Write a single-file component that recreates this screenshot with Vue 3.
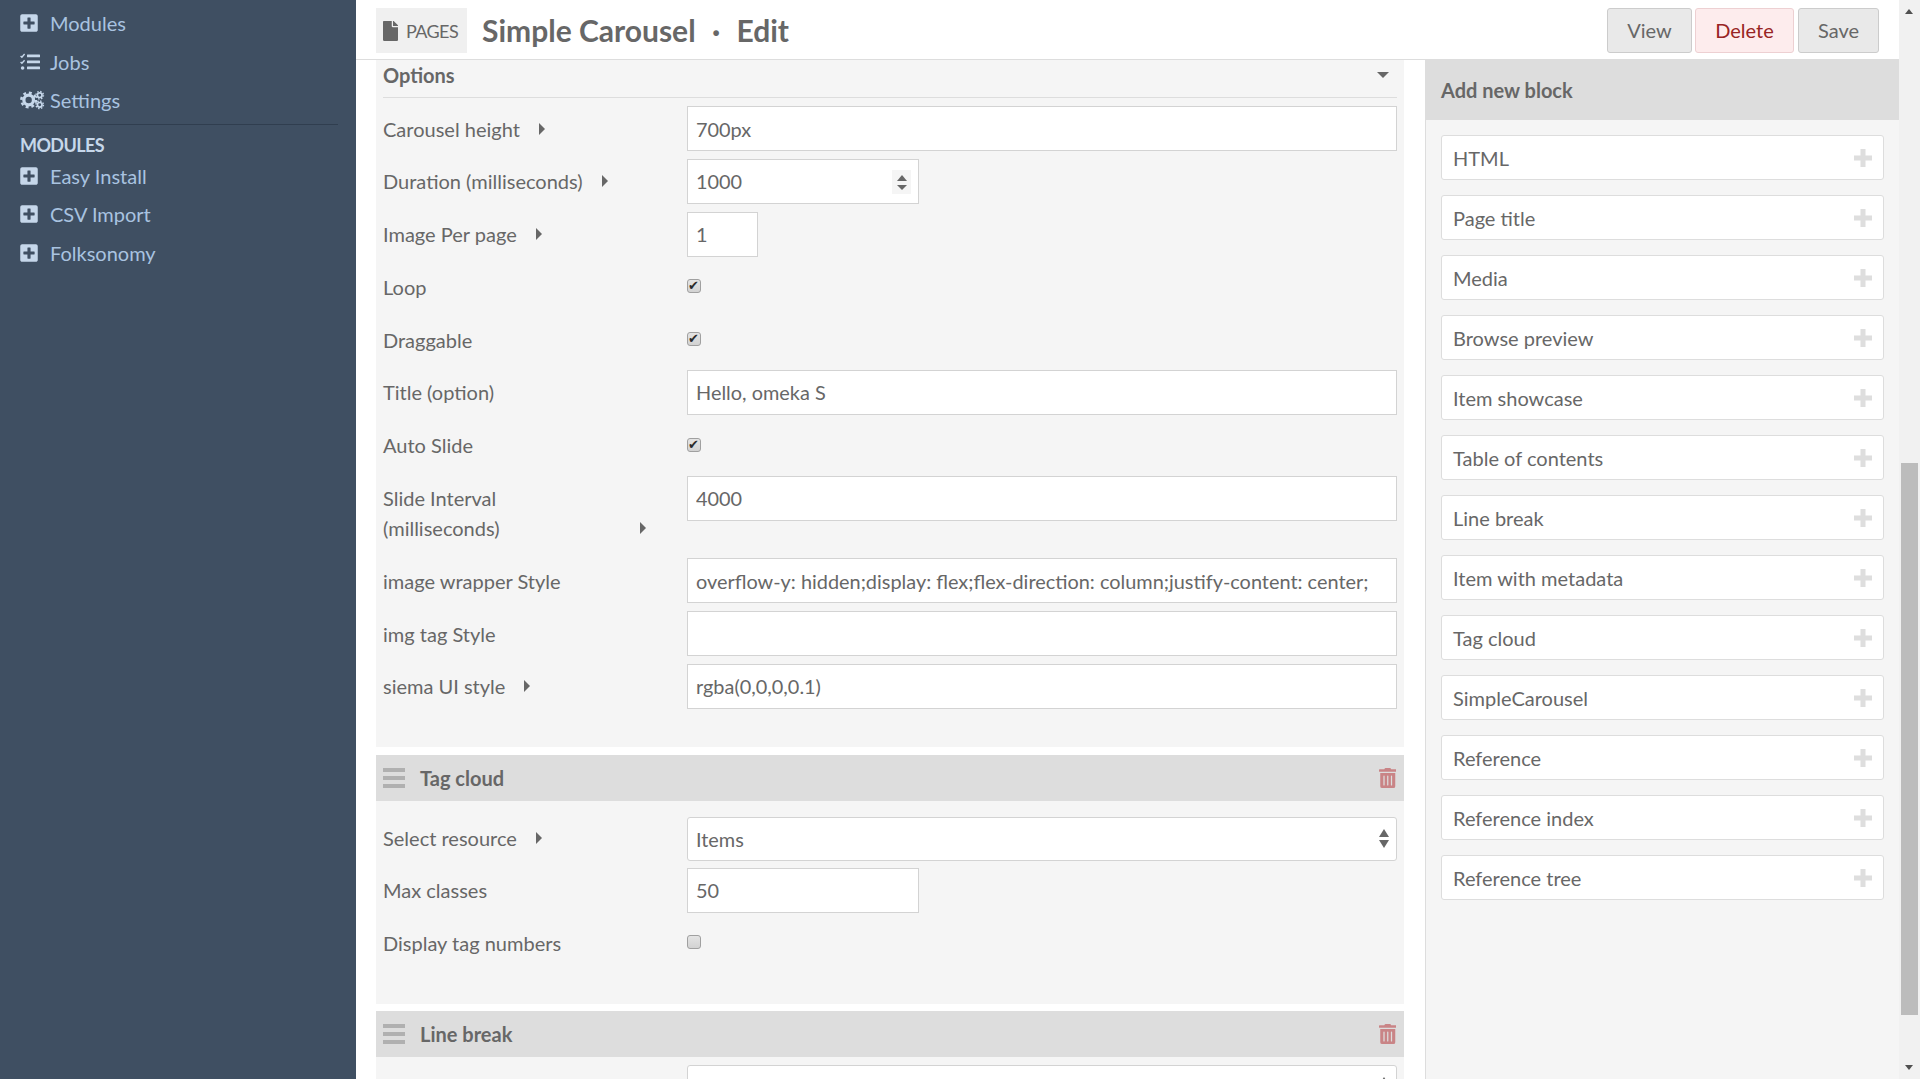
<script setup>
const navTop = [
  { name: 'Modules', icon: 'plus' },
  { name: 'Jobs', icon: 'tasks' },
  { name: 'Settings', icon: 'cogs' }
]
const navModules = ['Easy Install', 'CSV Import', 'Folksonomy']
const blocks = [
  'HTML', 'Page title', 'Media', 'Browse preview', 'Item showcase', 'Table of contents',
  'Line break', 'Item with metadata', 'Tag cloud', 'SimpleCarousel', 'Reference',
  'Reference index', 'Reference tree'
]
const plusSquare = 'M400 32H48C21.5 32 0 53.5 0 80v352c0 26.5 21.5 48 48 48h352c26.5 0 48-21.5 48-48V80c0-26.5-21.5-48-48-48zm-32 252c0 6.6-5.4 12-12 12h-92v92c0 6.6-5.4 12-12 12h-56c-6.6 0-12-5.4-12-12v-92H92c-6.6 0-12-5.4-12-12v-56c0-6.6 5.4-12 12-12h92v-92c0-6.6 5.4-12 12-12h56c6.6 0 12 5.4 12 12v92h92c6.6 0 12 5.4 12 12v56z'
const trash = 'M32 464a48 48 0 0 0 48 48h288a48 48 0 0 0 48-48V128H32zm272-256a16 16 0 0 1 32 0v224a16 16 0 0 1-32 0zm-96 0a16 16 0 0 1 32 0v224a16 16 0 0 1-32 0zm-96 0a16 16 0 0 1 32 0v224a16 16 0 0 1-32 0zM432 32H312l-9.4-18.7A24 24 0 0 0 281.1 0H166.8a23.72 23.72 0 0 0-21.4 13.3L136 32H16A16 16 0 0 0 0 48v32a16 16 0 0 0 16 16h416a16 16 0 0 0 16-16V48a16 16 0 0 0-16-16z'
const filePath = 'M224 136V0H24C10.7 0 0 10.7 0 24v464c0 13.3 10.7 24 24 24h336c13.3 0 24-10.7 24-24V160H248c-13.2 0-24-10.8-24-24zm160-14.1v6.1H256V0h6.1c6.4 0 12.5 2.5 17 7l97.9 98c4.5 4.5 7 10.6 7 16.9z'
</script>

<template>
  <div class="page">
    <aside class="sidebar">
      <ul class="nav first">
        <li v-for="item in navTop" :key="item.name">
          <svg v-if="item.icon === 'plus'" class="nav-icon" viewBox="0 0 448 512"><path :d="plusSquare" /></svg>
          <svg v-else-if="item.icon === 'tasks'" class="nav-icon tasks" viewBox="0 0 20 18">
            <path d="M.6 3l1.3 1.3L4.6 1M.6 9l1.3 1.3 2.7-3" fill="none" stroke="currentColor" stroke-width="1.4" />
            <circle cx="2.6" cy="15" r="1.8" />
            <rect x="7" y="1.6" width="13" height="2.6" rx=".5" />
            <rect x="7" y="7.6" width="13" height="2.6" rx=".5" />
            <rect x="7" y="13.6" width="13" height="2.6" rx=".5" />
          </svg>
          <svg v-else class="nav-icon cogs" viewBox="0 0 26 20">
            <circle cx="9" cy="10" r="5" fill="none" stroke="currentColor" stroke-width="3.4" />
            <circle cx="9" cy="10" r="7.6" fill="none" stroke="currentColor" stroke-width="2.6" stroke-dasharray="3 2.97" />
            <circle cx="20.5" cy="5" r="2.4" fill="none" stroke="currentColor" stroke-width="1.8" />
            <circle cx="20.5" cy="5" r="3.9" fill="none" stroke="currentColor" stroke-width="1.5" stroke-dasharray="1.5 1.56" />
            <circle cx="20.5" cy="15" r="2.4" fill="none" stroke="currentColor" stroke-width="1.8" />
            <circle cx="20.5" cy="15" r="3.9" fill="none" stroke="currentColor" stroke-width="1.5" stroke-dasharray="1.5 1.56" />
          </svg>
          <span class="nav-text" :class="{ tight: item.icon === 'cogs', mid: item.icon === 'tasks' }">{{ item.name }}</span>
        </li>
      </ul>
      <div class="nav-rule"></div>
      <h4 class="nav-head">MODULES</h4>
      <ul class="nav">
        <li v-for="name in navModules" :key="name">
          <svg class="nav-icon" viewBox="0 0 448 512"><path :d="plusSquare" /></svg>
          <span class="nav-text">{{ name }}</span>
        </li>
      </ul>
    </aside>

    <div class="main">
      <header class="topbar">
        <div class="crumb">
          <svg class="crumb-icon" viewBox="0 0 384 512"><path :d="filePath" /></svg>
          <span>PAGES</span>
        </div>
        <h1 class="title">Simple Carousel <span class="dot">·</span> Edit</h1>
        <div class="actions">
          <button class="btn btn-view">View</button>
          <button class="btn btn-delete">Delete</button>
          <button class="btn btn-save">Save</button>
        </div>
      </header>

      <div class="content">
        <section class="blocks">
          <div class="block opts-block">
            <div class="opts-head">
              <span>Options</span>
              <i class="caret-down"></i>
            </div>
            <div class="row">
              <label class="lbl">Carousel height<i class="caret"></i></label>
              <input class="field" value="700px" />
            </div>
            <div class="row">
              <label class="lbl">Duration (milliseconds)<i class="caret"></i></label>
              <div class="spin-wrap">
                <input class="field" value="1000" />
                <span class="spin"><i class="up"></i><i class="down"></i></span>
              </div>
            </div>
            <div class="row">
              <label class="lbl">Image Per page<i class="caret"></i></label>
              <input class="field tiny" value="1" />
            </div>
            <div class="row">
              <label class="lbl">Loop</label>
              <input class="check" type="checkbox" checked />
            </div>
            <div class="row">
              <label class="lbl">Draggable</label>
              <input class="check" type="checkbox" checked />
            </div>
            <div class="row">
              <label class="lbl">Title (option)</label>
              <input class="field" value="Hello, omeka S" />
            </div>
            <div class="row">
              <label class="lbl">Auto Slide</label>
              <input class="check" type="checkbox" checked />
            </div>
            <div class="row tall">
              <label class="lbl lbl-wrap"><span class="wrapped">Slide Interval (milliseconds)</span><i class="caret"></i></label>
              <input class="field" value="4000" />
            </div>
            <div class="row">
              <label class="lbl">image wrapper Style</label>
              <input class="field" value="overflow-y: hidden;display: flex;flex-direction: column;justify-content: center;" />
            </div>
            <div class="row">
              <label class="lbl">img tag Style</label>
              <input class="field" value="" />
            </div>
            <div class="row">
              <label class="lbl">siema UI style<i class="caret"></i></label>
              <input class="field" value="rgba(0,0,0,0.1)" />
            </div>
          </div>

          <div class="block tag-block">
            <div class="block-head">
              <span class="bars"><i></i><i></i><i></i></span>
              <span class="block-name">Tag cloud</span>
              <svg class="trash" viewBox="0 0 448 512"><path :d="trash" /></svg>
            </div>
            <div class="block-body">
              <div class="row select-row">
                <label class="lbl">Select resource<i class="caret"></i></label>
                <div class="select-wrap">
                  <select class="field select"><option>Items</option></select>
                  <span class="select-arrows"><i class="up"></i><i class="down"></i></span>
                </div>
              </div>
              <div class="row">
                <label class="lbl">Max classes</label>
                <input class="field short" value="50" />
              </div>
              <div class="row">
                <label class="lbl">Display tag numbers</label>
                <input class="check" type="checkbox" />
              </div>
            </div>
          </div>

          <div class="block">
            <div class="block-head">
              <span class="bars"><i></i><i></i><i></i></span>
              <span class="block-name">Line break</span>
              <svg class="trash" viewBox="0 0 448 512"><path :d="trash" /></svg>
            </div>
            <div class="block-body last">
              <div class="row select-row">
                <label class="lbl"></label>
                <div class="select-wrap">
                  <select class="field select"><option></option></select>
                  <span class="select-arrows"><i class="up"></i><i class="down"></i></span>
                </div>
              </div>
            </div>
          </div>
        </section>

        <aside class="panel">
          <h3 class="panel-head">Add new block</h3>
          <div class="panel-list">
            <button v-for="b in blocks" :key="b" class="add-btn">
              <span>{{ b }}</span>
              <svg class="add-plus" viewBox="0 0 18 18"><path d="M6.5 0h5v6.5H18v5h-6.5V18h-5v-6.5H0v-5h6.5z" /></svg>
            </button>
          </div>
        </aside>
      </div>
    </div>

    <div class="scrollbar">
      <i class="sb-up"></i>
      <div class="sb-thumb"></div>
      <i class="sb-down"></i>
    </div>
  </div>
</template>

<style>
html, body { margin: 0; overflow: hidden; }
</style>

<style scoped>
.page {
  display: flex;
  height: 100vh;
  overflow: hidden;
  font-family: Lato, "Open Sans", sans-serif;
  font-size: 20px;
  color: #676767;
  background: #fff;
}

/* sidebar */
.sidebar {
  width: 356px;
  flex: none;
  background: #3f4f62;
  color: #a9c3e0;
}
.nav {
  list-style: none;
  margin: 0;
  padding: 0 0 0 20px;
}
.nav.first { padding-top: 4px; }
.nav li {
  display: flex;
  align-items: center;
  height: 38.5px;
}
.nav-icon {
  width: 18px;
  height: 20px;
  flex: none;
  fill: #c6d7ea;
  color: #c6d7ea;
}
.nav-icon.tasks { width: 20px; }
.nav-icon.cogs {
  width: 25px;
}
.nav-text {
  margin-left: 12px;
}
.nav-text.mid { margin-left: 10px; }
.nav-text.tight { margin-left: 5px; }
.nav-rule {
  margin: 4px 18px 0 20px;
  border-top: 1px solid #303e4f;
}
.nav-head {
  margin: 8px 0 0 20px;
  font-size: 18px;
  line-height: 24px;
  font-weight: 700;
  letter-spacing: -0.6px;
  color: #c6d7ea;
}

/* main */
.main {
  flex: 1;
  min-width: 0;
  display: flex;
  flex-direction: column;
}
.topbar {
  height: 60px;
  flex: none;
  display: flex;
  align-items: flex-start;
  padding: 8px 20px 0;
  box-sizing: border-box;
  border-bottom: 1px solid #ddd;
}
.crumb {
  width: 91px;
  height: 45px;
  box-sizing: border-box;
  background: #f0f0f0;
  display: flex;
  align-items: center;
  padding-left: 7px;
  font-size: 18px;
  letter-spacing: -0.6px;
}
.crumb-icon {
  width: 15px;
  height: 20px;
  margin-right: 8px;
  fill: #676767;
}
.title {
  margin: 0 0 0 15px;
  font-size: 30px;
  line-height: 45px;
  font-weight: 700;
  color: #676767;
  white-space: pre;
}
.dot {
  margin: 0 9px;
}
.actions {
  margin-left: auto;
  display: flex;
  gap: 3px;
}
.btn {
  height: 45px;
  border: 1px solid #ccc;
  border-radius: 3px;
  background: #e9e9e9;
  color: #676767;
  font: 400 20px Lato, sans-serif;
  padding: 0 0 2px;
}
.btn-view { width: 85px; }
.btn-delete {
  width: 99px;
  background: #fdeced;
  border-color: #edd0d2;
  color: #982424;
}
.btn-save { width: 81px; margin-left: 1px; }

.content {
  flex: 1;
  min-height: 0;
  display: flex;
  overflow: hidden;
}
.blocks {
  width: 1028px;
  margin-left: 20px;
  flex: none;
}
.block {
  background: #f5f5f5;
  margin-bottom: 8px;
}
.tag-block { margin-bottom: 7px; }
.opts-block {
  padding: 0 7px;
  height: 687px;
  box-sizing: border-box;
}
.opts-head {
  height: 38px;
  box-sizing: border-box;
  border-bottom: 1px solid #ddd;
  margin-bottom: 8px;
  display: flex;
  align-items: center;
  justify-content: space-between;
  padding: 0 8px 8px 0;
  font-weight: 700;
  line-height: 30px;
}
.caret-down {
  width: 0;
  height: 0;
  border-left: 6px solid transparent;
  border-right: 6px solid transparent;
  border-top: 6px solid #676767;
}
.row {
  display: grid;
  grid-template-columns: 304px 1fr;
  align-items: start;
  margin-bottom: 7.8px;
  min-height: 45px;
}
.row.tall { min-height: 75px; }
.row.select-row {
  min-height: 43.6px;
  margin-bottom: 7px;
}
.lbl {
  display: flex;
  align-items: center;
  padding: 7.5px 0;
  line-height: 30px;
  min-height: 30px;
}
.select-row .lbl { padding: 5.5px 0 7.5px; }
.lbl-wrap { align-items: flex-end; }
.wrapped { width: 197px; padding-right: 41px; }
.caret {
  width: 0;
  height: 0;
  margin-left: 19px;
  border-top: 6px solid transparent;
  border-bottom: 6px solid transparent;
  border-left: 6px solid #676767;
  flex: none;
}
.lbl-wrap .caret { margin-bottom: 9px; }
.field {
  width: 100%;
  height: 45px;
  box-sizing: border-box;
  padding: 0 8px;
  background: #fff;
  border: 1px solid #d3d3d3;
  font: 400 19.9px Lato, sans-serif;
  color: #676767;
  outline: none;
  border-radius: 0;
  display: block;
}
.field.tiny { width: 71px; }
.field.short { width: 232px; }
.spin-wrap {
  position: relative;
  width: 232px;
}
.spin {
  position: absolute;
  right: 8px;
  top: 11px;
  width: 19px;
  height: 24px;
  background: #f5f5f5;
  box-sizing: border-box;
  padding-top: 5px;
  display: flex;
  flex-direction: column;
  align-items: center;
  gap: 4px;
}
.spin i, .select-arrows i {
  width: 0;
  height: 0;
  display: block;
  border-left: 5px solid transparent;
  border-right: 5px solid transparent;
}
.spin .up { border-bottom: 6px solid #676767; }
.spin .down { border-top: 5px solid #676767; }
.check {
  appearance: none;
  width: 14px;
  height: 14px;
  margin: 15px 0 0;
  padding: 0;
  box-sizing: border-box;
  border: 1px solid #a0a0a0;
  border-radius: 3px;
  background: linear-gradient(#e4e4e4, #d2d2d2);
  position: relative;
  display: block;
}
.check:checked::before {
  content: "✔";
  position: absolute;
  left: 0;
  top: -1px;
  font: 13px/13px "DejaVu Sans", sans-serif;
  color: #2a2a2a;
}
.block-head {
  height: 46px;
  background: #ddd;
  display: flex;
  align-items: center;
  padding: 0 8px 0 7px;
}
.bars {
  width: 22px;
  display: flex;
  flex-direction: column;
  gap: 4.2px;
}
.bars i {
  height: 3.6px;
  background: #b0b0b0;
  display: block;
}
.block-name {
  margin-left: 15px;
  font-weight: 700;
}
.trash {
  width: 17.5px;
  height: 20px;
  margin-left: auto;
  fill: #c98486;
}
.block-body {
  padding: 16px 7px 30.8px;
}
.block-body.last { padding-top: 8px; }
.select-wrap { position: relative; }
.select {
  appearance: none;
  border-radius: 3px;
  height: 43.6px;
}
.select-arrows {
  position: absolute;
  right: 8px;
  top: 12px;
  display: flex;
  flex-direction: column;
  gap: 3px;
}
.select-arrows .up { border-bottom: 8px solid #676767; }
.select-arrows .down { border-top: 8px solid #676767; }

/* right panel */
.panel {
  width: 473px;
  margin-left: 21px;
  flex: none;
  background: #f5f5f5;
  border-left: 1px solid #ddd;
}
.panel-head {
  margin: 0;
  height: 60px;
  background: #ddd;
  padding: 0 15px;
  line-height: 60px;
  font-size: 20px;
  font-weight: 700;
}
.panel-list {
  display: flex;
  flex-direction: column;
  gap: 15px;
  padding: 15px 15px 0;
}
.add-btn {
  height: 45px;
  box-sizing: border-box;
  border: 1px solid #ddd;
  border-radius: 3px;
  background: #fff;
  display: flex;
  align-items: center;
  justify-content: space-between;
  padding: 0 11px;
  font: 400 20px Lato, sans-serif;
  color: #676767;
}
.add-plus {
  width: 18px;
  height: 18px;
  fill: #dedede;
}

/* scrollbar */
.scrollbar {
  width: 21px;
  flex: none;
  background: #f1f1f1;
  position: relative;
}
.sb-thumb {
  position: absolute;
  left: 2px;
  right: 2px;
  top: 463px;
  height: 552px;
  background: #bcbcbc;
}
.sb-up, .sb-down {
  position: absolute;
  left: 6px;
  width: 0;
  height: 0;
  border-left: 4.5px solid transparent;
  border-right: 4.5px solid transparent;
}
.sb-up { top: 9px; border-bottom: 5px solid #505050; }
.sb-down { bottom: 9px; border-top: 5px solid #505050; }
</style>
